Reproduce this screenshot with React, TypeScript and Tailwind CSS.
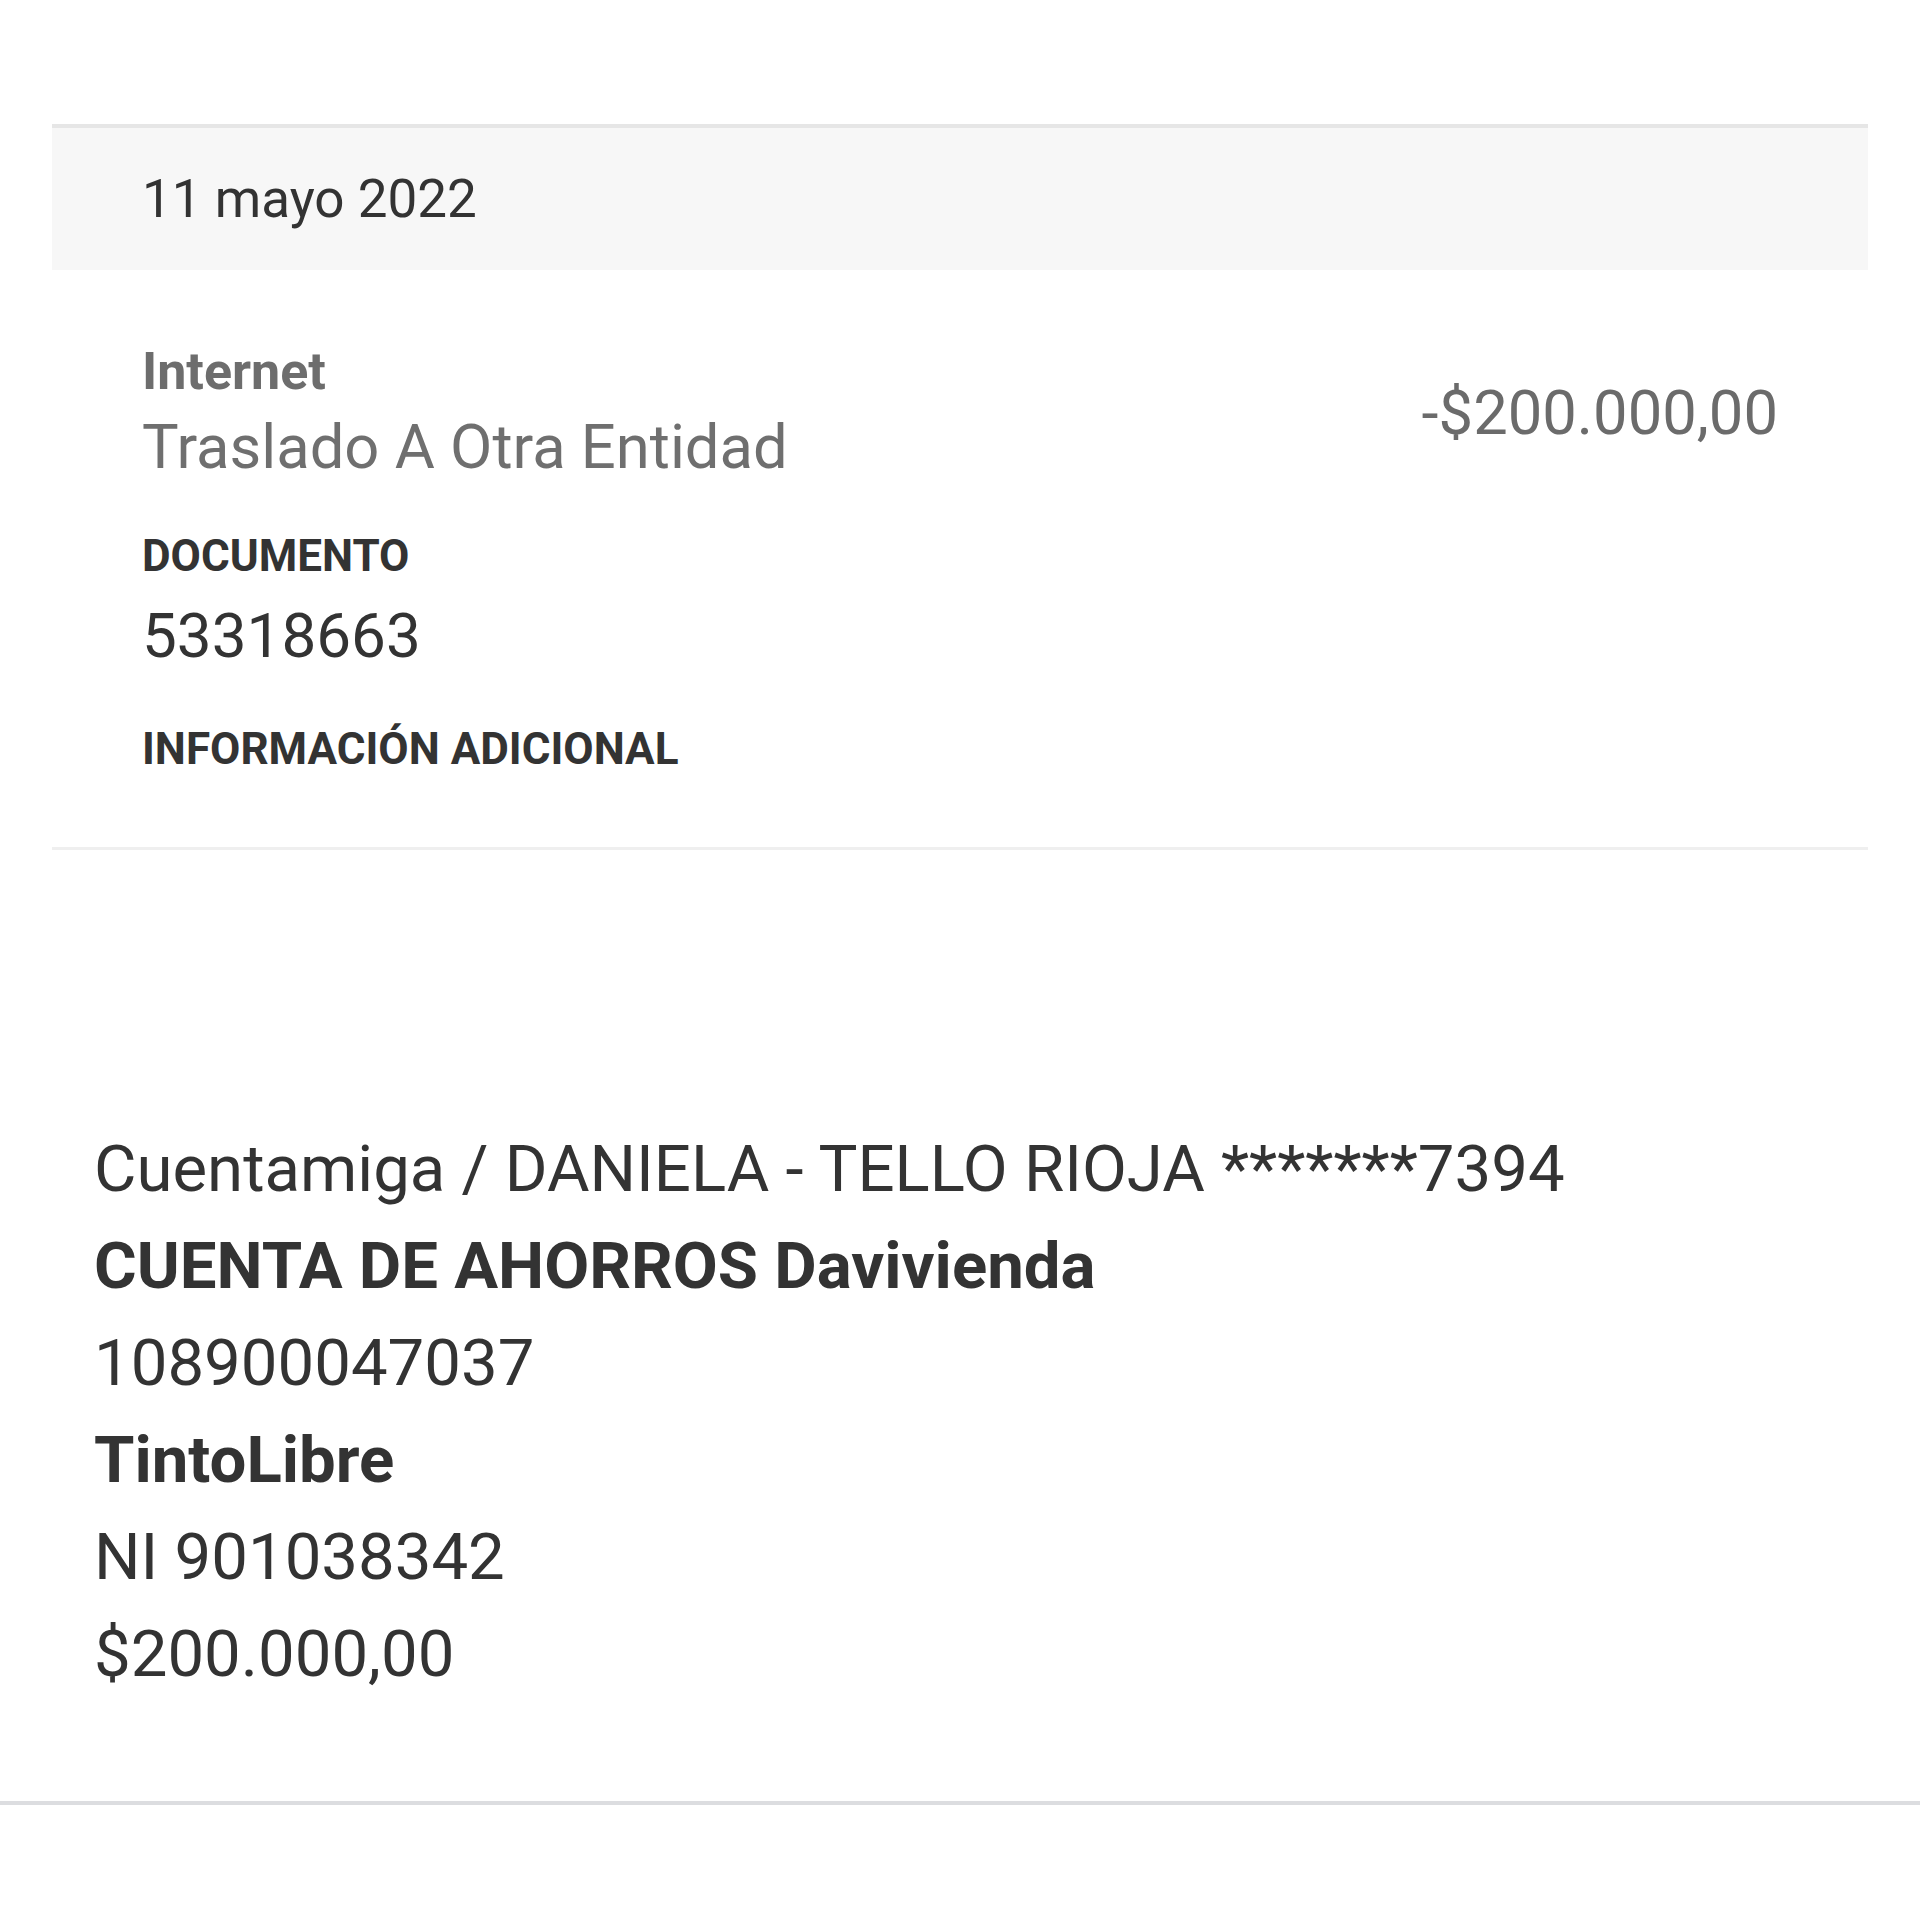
const rows = [
  { text: "Cuentamiga / DANIELA - TELLO RIOJA *******7394", bold: false },
  { text: "CUENTA DE AHORROS Davivienda", bold: true },
  { text: "108900047037", bold: false },
  { text: "TintoLibre", bold: true },
  { text: "NI 901038342", bold: false },
  { text: "$200.000,00", bold: false },
];

function App() {
  return (
    <div className="min-h-[1920px] w-full bg-white font-['Roboto','Liberation_Sans',sans-serif] text-[#333333]">
      <div className="pt-[124px]">
        <section className="mx-[52px]">
          <div className="flex h-[146px] items-center border-t-4 border-[#e6e6e6] bg-[#f7f7f7] px-[90px]">
            <span className="text-[53px] leading-[60px]">11 mayo 2022</span>
          </div>

          <div className="border-b-[3px] border-[#efefef] px-[90px] pt-[74px] pb-[73px]">
            <div className="flex items-center justify-between">
              <div className="flex flex-col">
                <span className="text-[52px] font-bold leading-[56px] text-[#6d6d6d]">Internet</span>
                <span className="mt-[12px] text-[61.5px] leading-[70px] text-[#6f6f6f]">Traslado A Otra Entidad</span>
              </div>
              <span className="text-[61.5px] leading-[70px] text-[#6b6b6b]">-$200.000,00</span>
            </div>
            <div className="mt-[49px] text-[44px] font-bold leading-[50px]">DOCUMENTO</div>
            <div className="mt-[20px] text-[62px] leading-[70px]">53318663</div>
            <div className="mt-[53px] text-[44px] font-bold leading-[50px]">INFORMACIÓN ADICIONAL</div>
          </div>
        </section>

        <section className="mt-[270px] border-b-[4px] border-[#dcdde0] pb-[99px] pl-[94px]">
          {rows.map((r) => (
            <div key={r.text} className={r.bold ? "text-[65.3px] font-bold leading-[97px]" : "text-[65.3px] leading-[97px]"}>
              {r.text}
            </div>
          ))}
        </section>
      </div>
    </div>
  );
}

export default App;
